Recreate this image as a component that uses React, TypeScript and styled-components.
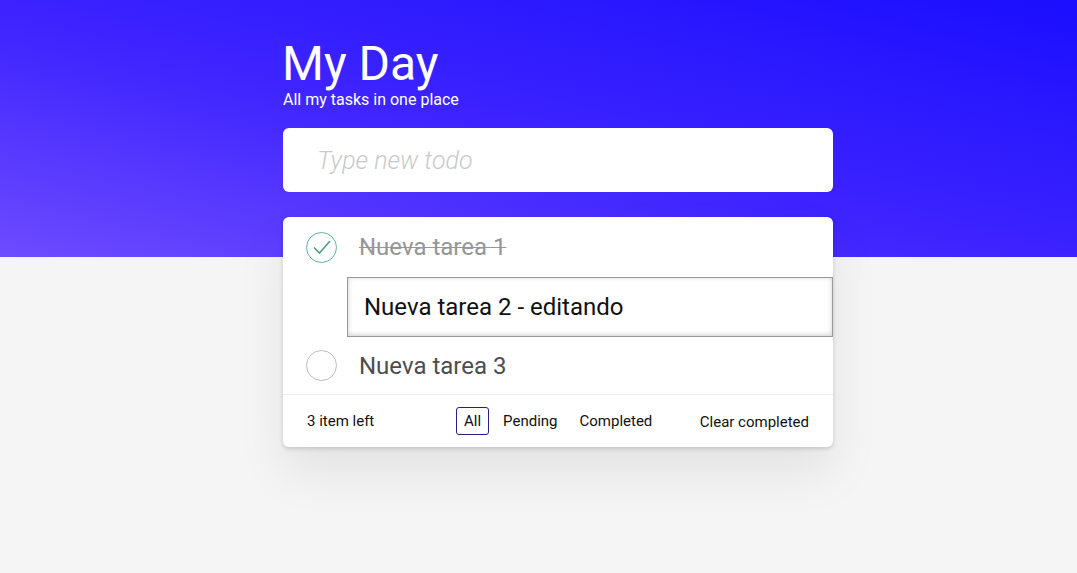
import styled, { createGlobalStyle } from "styled-components";

const GlobalStyle = createGlobalStyle`
  html, body {
    margin: 0;
    padding: 0;
    background: #f5f5f5;
    font-family: Roboto, "Liberation Sans", sans-serif;
  }
  * { box-sizing: border-box; }
`;

type Todo = { id: number; title: string; done: boolean; editing?: boolean };

const todos: Todo[] = [
  { id: 1, title: "Nueva tarea 1", done: true },
  { id: 2, title: "Nueva tarea 2 - editando", done: false, editing: true },
  { id: 3, title: "Nueva tarea 3", done: false },
];

export default function App() {
  return (
    <>
      <GlobalStyle />
      <Page>
        <Hero />
        <Main>
          <Title>My Day</Title>
          <Subtitle>All my tasks in one place</Subtitle>
          <NewTodo placeholder="Type new todo" />
          <Card>
            <List>
              {todos.map((t) =>
                t.editing ? (
                  <EditRow key={t.id}>
                    <EditInput defaultValue={t.title} />
                  </EditRow>
                ) : (
                  <Row key={t.id}>
                    <Check $done={t.done}>
                      {t.done && (
                        <svg width="20" height="16" viewBox="0 0 20 16" fill="none">
                          <path d="M2 8.5 L7.5 14 L18 2" stroke="#4aa37f" strokeWidth="1.6" />
                        </svg>
                      )}
                    </Check>
                    <Label $done={t.done}>{t.title}</Label>
                  </Row>
                )
              )}
            </List>
            <Footer>
              <Count>3 item left</Count>
              <Filters>
                <Filter $active>All</Filter>
                <Filter>Pending</Filter>
                <Filter>Completed</Filter>
              </Filters>
              <Clear>Clear completed</Clear>
            </Footer>
          </Card>
        </Main>
      </Page>
    </>
  );
}

const Page = styled.div`
  position: relative;
  min-height: 573px;
  overflow: hidden;
`;

const Hero = styled.div`
  position: absolute;
  top: 0;
  left: 0;
  right: 0;
  height: 257px;
  background: linear-gradient(to top right, #6d4bff 0%, #3f25ff 45%, #1a0eff 100%);
`;

const Main = styled.main`
  position: relative;
  width: 550px;
  margin-left: calc(50% - 255.5px);
  padding-top: 35px;
  display: flex;
  flex-direction: column;
`;

const Title = styled.h1`
  margin: 0 0 0 -1px;
  font-size: 48px;
  font-weight: 400;
  line-height: 58px;
  color: #fff;
`;

const Subtitle = styled.p`
  margin: -2px 0 0;
  font-size: 16px;
  line-height: 18px;
  color: #fff;
`;

const NewTodo = styled.input`
  margin-top: 19px;
  height: 64px;
  border: none;
  border-radius: 6px;
  background: #fff;
  padding: 0 34px;
  font-family: inherit;
  font-size: 25px;
  outline: none;
  &::placeholder {
    color: #c9c9c9;
    font-style: italic;
    font-weight: 300;
  }
`;

const Card = styled.section`
  margin-top: 25px;
  background: #fff;
  border-radius: 6px;
  box-shadow: 0 2px 4px rgba(0, 0, 0, 0.15), 0 25px 50px rgba(0, 0, 0, 0.08);
`;

const List = styled.ul`
  list-style: none;
  margin: 0;
  padding: 0;
  border-bottom: 1px solid #ededed;
`;

const Row = styled.li`
  display: flex;
  align-items: center;
  height: 60px;
  padding-left: 23px;
  gap: 22px;
  &:last-child {
    height: 57px;
  }
`;

const Check = styled.span<{ $done: boolean }>`
  width: 31px;
  height: 31px;
  border-radius: 50%;
  border: 1px solid ${({ $done }) => ($done ? "#5fb897" : "#bdbdbd")};
  display: flex;
  align-items: center;
  justify-content: center;
`;

const Label = styled.span<{ $done: boolean }>`
  font-size: 24px;
  color: ${({ $done }) => ($done ? "#969696" : "#4d4d4d")};
  text-decoration: ${({ $done }) => ($done ? "line-through" : "none")};
  text-decoration-thickness: 1px;
`;

const EditRow = styled.li`
  height: 60px;
  padding-left: 64px;
  display: flex;
`;

const EditInput = styled.input`
  flex: 1;
  height: 60px;
  border: 1px solid #999;
  box-shadow: inset 0 -1px 5px rgba(0, 0, 0, 0.2);
  padding: 0 16px;
  font-family: inherit;
  font-size: 24px;
  color: #111;
  outline: none;
`;

const Footer = styled.footer`
  display: flex;
  align-items: center;
  height: 52px;
  padding: 0 24px;
  font-size: 15px;
  color: #111;
`;

const Count = styled.span`
  width: 149px;
`;

const Filters = styled.div`
  display: flex;
  gap: 6px;
  flex: 1;
`;

const Filter = styled.span<{ $active?: boolean }>`
  padding: 4px 7px;
  border: 1px solid ${({ $active }) => ($active ? "#2e1a8a" : "transparent")};
  border-radius: 3px;
`;

const Clear = styled.span`
  margin-top: 2px;
`;
